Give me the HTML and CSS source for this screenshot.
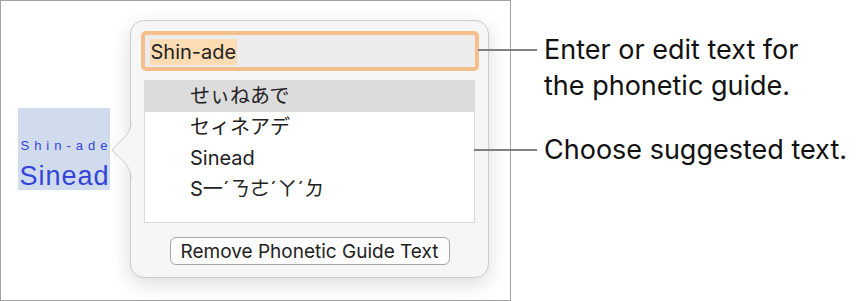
FILE: index.html
```html
<!DOCTYPE html>
<html>
<head>
<meta charset="utf-8">
<link rel="stylesheet" href="styles.css">
</head>
<body>
<div class="page">
  <div class="frame">
    <div class="selection">
      <div class="ruby">Shin-ade</div>
      <div class="base">Sinead</div>
    </div>
    <div class="popover">
      <svg class="arrow" width="21" height="56" viewBox="0 0 21 56">
        <path d="M20 0 C20 9 15 14 9 20 L2.5 26 Q0.5 28 2.5 30 L9 36 C15 42 20 47 20 56 L21 56 L21 0 Z" fill="#f6f6f6"/>
        <path d="M20 0 C20 9 15 14 9 20 L2.5 26 Q0.5 28 2.5 30 L9 36 C15 42 20 47 20 56" fill="none" stroke="#c9c9c9" stroke-width="1"/>
      </svg>
      <div class="field"><span class="sel">Shin-ade</span></div>
      <div class="list">
        <div class="row active">せぃねあで</div>
        <div class="row">セィネアデ</div>
        <div class="row">Sinead</div>
        <div class="row">S一ˊㄋㄜˊㄚˊㄉ</div>
      </div>
      <button class="btn">Remove Phonetic Guide Text</button>
    </div>
  </div>
  <div class="notes">
    <div class="note note1">Enter or edit text for<br>the phonetic guide.</div>
    <div class="note note2">Choose suggested text.</div>
  </div>
</div>
</body>
</html>
```
FILE: styles.css
```css
html, body {
  margin: 0;
  padding: 0;
  background: #ffffff;
}
body {
  font-family: "Inter", "Noto Sans CJK JP", sans-serif;
  color: #1d1d1d;
}
.page {
  display: flex;
  width: 859px;
  height: 301px;
}
.frame {
  box-sizing: border-box;
  width: 511px;
  height: 301px;
  border: 1px solid #a3a3a3;
  display: flex;
  align-items: flex-start;
  padding-left: 17px;
}
.selection {
  margin-top: 107px;
  width: 92px;
  height: 82px;
  background: #d0dbee;
  display: flex;
  flex-direction: column;
  align-items: center;
  color: #3444d8;
  font-family: "Liberation Sans", sans-serif;
}
.ruby {
  margin-top: 31px;
  font-size: 13px;
  letter-spacing: 5px;
  margin-right: -5px;
  line-height: 14px;
}
.base {
  font-size: 27px;
  line-height: 30px;
  letter-spacing: 1px;
  margin-right: -1px;
  margin-top: 8px;
}
.popover {
  position: relative;
  box-sizing: border-box;
  margin-top: 19px;
  margin-left: 20px;
  width: 359px;
  height: 258px;
  background: #f6f6f6;
  border: 1px solid #cbcbcb;
  border-radius: 14px;
  box-shadow: 0 6px 20px rgba(0,0,0,0.14);
  display: flex;
  flex-direction: column;
  align-items: center;
  padding-top: 10px;
}
.arrow {
  position: absolute;
  left: -20px;
  top: 101px;
}
.field {
  box-sizing: border-box;
  width: 338px;
  height: 40px;
  border: 4px solid #f5be8b;
  border-radius: 5px;
  background: #ececec;
  padding: 1px 0 0 5px;
  display: flex;
  align-items: center;
  font-size: 20px;
  color: #222;
}
.sel {
  background: #fedcb3;
  line-height: 26px;
  padding: 0 1px;
}
.list {
  box-sizing: border-box;
  margin-top: 9px;
  width: 331px;
  height: 143px;
  background: #fff;
  border: 1px solid #dadada;
}
.row {
  height: 31px;
  line-height: 31px;
  padding-left: 45px;
  font-size: 20px;
  color: #222;
}
.row.active {
  background: #dcdcdc;
}
.btn {
  margin-top: 14px;
  width: 280px;
  height: 28px;
  box-sizing: border-box;
  border: 1px solid #a6a6a6;
  border-radius: 6px;
  background: #fdfdfd;
  font-family: "Inter", sans-serif;
  font-size: 19px;
  line-height: 26px;
  color: #222;
  padding: 1px 0 0;
}
.notes {
  display: flex;
  flex-direction: column;
  padding-top: 32px;
  padding-left: 33px;
  gap: 28px;
}
.note {
  position: relative;
  font-size: 27px;
  line-height: 36px;
  color: #111;
  white-space: nowrap;
}
.note::before {
  content: "";
  position: absolute;
  top: 17px;
  height: 2px;
  background: #808080;
}
.note1::before {
  left: -66px;
  width: 59px;
}
.note2::before {
  left: -70px;
  width: 63px;
}
```
